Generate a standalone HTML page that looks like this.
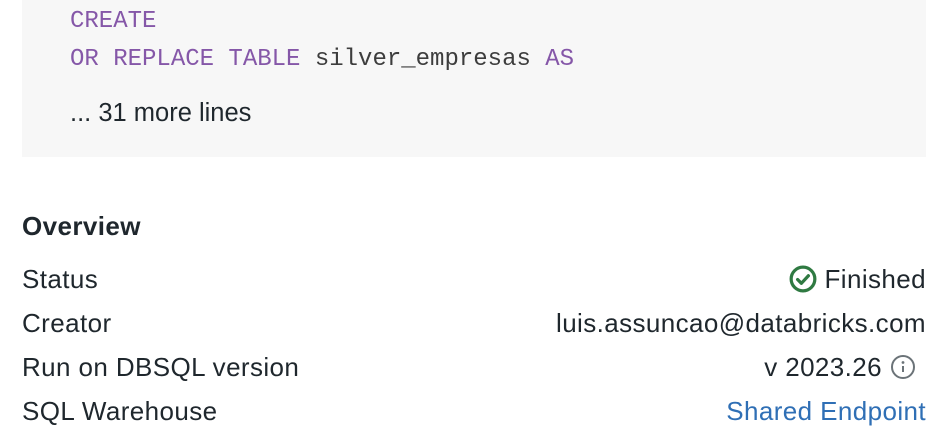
<!DOCTYPE html>
<html><head><style>
body{margin:0;width:941px;height:437px;background:#fff;overflow:hidden;font-family:"Liberation Sans",sans-serif;color:#1f272d;position:relative}
.code{position:absolute;left:22px;top:0;width:904px;height:157px;background:#f7f7f7}
.ln{position:absolute;left:48px;font-family:"Liberation Mono",monospace;font-size:24px;color:#3d3d3d;white-space:pre;line-height:30px}
.k{color:#8557a8}
.more{position:absolute;left:48px;top:98px;font-size:25.5px;line-height:30px}
.row{position:absolute;left:22px;width:904px;font-size:26px;line-height:30px;height:30px;letter-spacing:0.4px}
.row .r{position:absolute;right:0;top:0;display:flex;align-items:center;gap:8px}
</style></head><body>
<div class="code">
<div class="ln" style="top:7px"><span class="k">CREATE</span></div>
<div class="ln" style="top:45px"><span class="k">OR REPLACE TABLE</span> silver_empresas <span class="k">AS</span></div>
<div class="more">... 31 more lines</div>
</div>
<div class="row" style="top:211px;font-weight:bold">Overview</div>
<div class="row" style="top:264px">Status<span class="r"><svg width="28" height="28" viewBox="0 0 26 26"><circle cx="13" cy="13" r="11" fill="none" stroke="#2f7a42" stroke-width="3"/><path d="M8 13.5l3.5 3.5 6.5-7" fill="none" stroke="#2f7a42" stroke-width="3" stroke-linecap="round" stroke-linejoin="round"/></svg>Finished</span></div>
<div class="row" style="top:308px">Creator<span class="r">luis.assuncao@databricks.com</span></div>
<div class="row" style="top:352px">Run on DBSQL version<span class="r">v 2023.26 <svg width="26" height="26" viewBox="0 0 26 26" style="margin-right:10px"><circle cx="13" cy="13" r="11" fill="none" stroke="#6b7378" stroke-width="2"/><circle cx="13" cy="8.5" r="1.4" fill="#6b7378"/><path d="M13 12v6" stroke="#6b7378" stroke-width="2"/></svg></span></div>
<div class="row" style="top:396px">SQL Warehouse<span class="r" style="color:#2f6fb5">Shared Endpoint</span></div>
</body></html>
